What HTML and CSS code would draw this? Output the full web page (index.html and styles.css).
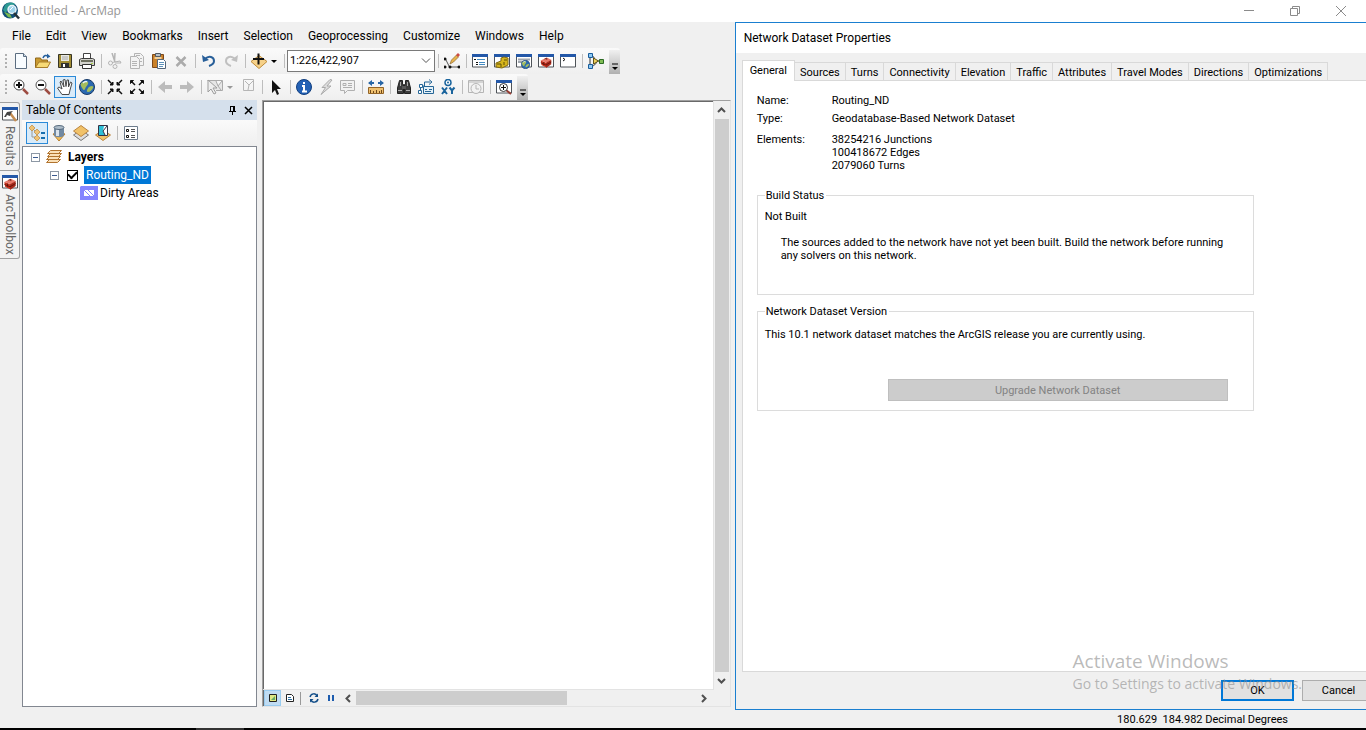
FILE: index.html
```html
<!DOCTYPE html>
<html lang="en">
<head>
<meta charset="utf-8">
<title>Untitled - ArcMap</title>
<link rel="stylesheet" href="styles.css">
</head>
<body>
<svg class="defs" aria-hidden="true">
  <defs>
    <symbol id="win" viewBox="0 0 16 16"><path d="M.5 1.500h15v12.500H.5z" fill="#fff" stroke="#4e5358"/><path d="M0 1h16v3H0z" fill="#2458a8"/></symbol>
    <symbol id="box" viewBox="0 0 16 16"><path d="M1 6l8-4 6 3-6 4z" fill="#e8796a"/><path d="M1 6l7 3v6l-6-3z" fill="#c8301c"/><path d="M8 9l7-4v6l-7 5z" fill="#a8281a"/><path d="M1 9l7 3 7-4M6 4l3-1v2M5 8v4" stroke="#571109" fill="none"/></symbol>
    <symbol id="globe" viewBox="0 0 16 16"><circle cx="8" cy="8" r="7.500" fill="#2b69b0" stroke="#173a68"/><path d="M4 3c4-2 6 0 5 2S7 7 6 10 3 9 2 7s0-3 2-4zM10 8c3-2 5-1 4 1s-3 4-5 4-1-3 1-5z" fill="#a4bd5c"/><path d="M4 4c1-1 3-2 4-1" stroke="#e8f4ff" stroke-width="1.500" fill="none"/></symbol>
  </defs>
</svg>
<div class="app">
  <header class="titlebar">
    <svg width="18" height="18" viewBox="0 0 18 18"><circle cx="8" cy="8.500" r="8" fill="#124f78"/><path d="M3 3c3-3 7-3 10-1l-3 3-4 1-2 5-3-3z" fill="#2d9a93"/><path d="M2 10l4 5 4 1-2-4z" fill="#78b84c"/><circle cx="10" cy="7.500" r="4" fill="#9fd4ec" stroke="#e8f3f7" stroke-width="1.500"/><path d="M8 8l3-3" stroke="#fff"/><path d="M12 11l5 5.500" stroke="#26323a" stroke-width="2.500"/></svg>
    <span class="caption">Untitled - ArcMap</span>
    <div class="winbtns">
      <button aria-label="Minimize"><svg width="12" height="12"><path d="M1 5.500h10" stroke="#8b8b8b"/></svg></button>
      <button aria-label="Restore"><svg width="12" height="12" fill="none" stroke="#8b8b8b"><path d="M1.500 3.500h7v7h-7zM3.500 3v-1.500h7v7H9"/></svg></button>
      <button aria-label="Close"><svg width="12" height="12"><path d="M1 1l10 10M11 1L1 11" stroke="#8b8b8b"/></svg></button>
    </div>
  </header>

  <main class="workspace">
    <section class="editor">
      <nav class="menubar">
        <button>File</button><button>Edit</button><button>View</button><button>Bookmarks</button><button>Insert</button><button>Selection</button><button>Geoprocessing</button><button>Customize</button><button>Windows</button><button>Help</button>
      </nav>

      <div class="toolbar" role="toolbar" aria-label="Standard">
        <span class="grip"></span>
        <button class="tool" aria-label="New"><svg viewBox="0 0 16 16"><path d="M2.500.5h8l3 3v12h-11z" fill="#f8fcff" stroke="#5b6d80"/><path d="M10.500.5v3h3" fill="#cbdcea" stroke="#5b6d80"/></svg></button>
        <button class="tool" aria-label="Open"><svg viewBox="0 0 16 16"><path d="M.5 14.500V5h5l1 2h6v7.500z" fill="#c99a31" stroke="#91691d"/><path d="M.5 14.500L4 9h11.500l-3 5.500z" fill="#f7da75" stroke="#a77d2b"/><path d="M8 5c1-3 3-3 5-2" stroke="#245f9d" stroke-width="1.500" fill="none"/><path d="M12 .5l3.500 3-3.500 2z" fill="#245f9d"/></svg></button>
        <button class="tool" aria-label="Save"><svg viewBox="0 0 16 16"><path d="M1.500 1.500h13v13h-13z" fill="#a28d34" stroke="#373526"/><path d="M4 2h8v6H4z" fill="#e9e9e3"/><path d="M5 4h6M5 6h6" stroke="#aaa"/><path d="M4 10h8v5H4z" fill="#303030"/><path d="M6 11h2v3H6z" fill="#fff"/></svg></button>
        <button class="tool" aria-label="Print"><svg viewBox="0 0 16 16"><path d="M4.500 6V.5h7V6" fill="#fff" stroke="#434343"/><path d="M.5 6.500l2-1h11l2 1v6H.5z" fill="#d4d4ce" stroke="#3d3d3d"/><path d="M2 8h12" stroke="#6e7060" stroke-width="2"/><path d="M3.500 11.500h9v4h-9z" fill="#fff" stroke="#333"/><path d="M12 10.500h2" stroke="#a8d34c"/></svg></button>
        <span class="sep"></span>
        <button class="tool" aria-label="Cut" disabled><svg viewBox="0 0 16 16" fill="none" stroke="#b4b4b4"><path d="M5 0l3 9M8 0l-.5 8" stroke-width="1.500"/><circle cx="3.500" cy="10" r="2"/><circle cx="8" cy="13.500" r="2"/><path d="M5 9.500l8-1.500 1 2-6 0" /></svg></button>
        <button class="tool" aria-label="Copy" disabled><svg viewBox="0 0 16 16" fill="#f3f3f3" stroke="#b4b4b4"><path d="M5.500.5h6l3 3v9h-9z"/><path d="M1.500 3.500h6l3 3v9h-9zM3 8.500h5M3 10.500h5M3 12.500h5M7 2.500h4M11 5.500h2M11 8.500h2"/></svg></button>
        <button class="tool" aria-label="Paste"><svg viewBox="0 0 16 16"><path d="M1.500 1.500h11v13h-11z" fill="#c98028" stroke="#7c4819"/><path d="M4.500.5h5v3h-5z" fill="#b8c0c8" stroke="#515a62"/><path d="M3.500 4h7v2h-7z" fill="#f1d09b"/><path d="M6.500 6.500h6l2 2v7h-8z" fill="#fff" stroke="#52657a"/><path d="M8 9.500h5M8 11.500h5M8 13.500h4" stroke="#5d91ba"/></svg></button>
        <button class="tool" aria-label="Delete" disabled><svg viewBox="0 0 16 16"><path d="M3.500 4l9 9M12.500 4l-9 9" stroke="#ababab" stroke-width="2.500"/></svg></button>
        <span class="sep"></span>
        <button class="tool" aria-label="Undo"><svg viewBox="0 0 16 16"><path d="M4 6c4-4 9-2 9 2 0 3-2 4-5 5" stroke="#285f99" stroke-width="2" fill="none"/><path d="M1 2l1 7 6-2z" fill="#285f99"/></svg></button>
        <button class="tool" aria-label="Redo" disabled><svg viewBox="0 0 16 16"><path d="M12 6C8 2 3 4 3 8c0 3 2 4 5 5" stroke="#c0c0c0" stroke-width="2" fill="none"/><path d="M15 2l-1 7-6-2z" fill="#c0c0c0"/></svg></button>
        <span class="sep"></span>
        <button class="tool" aria-label="Add Data"><svg viewBox="0 0 16 16"><path d="M8 2.500l8 6-8 7-8-7z" fill="#f6d189" stroke="#bf8c39"/><path d="M7.500.5v11M2 6h11" stroke="#111" stroke-width="2"/></svg></button>
        <button class="drop" aria-label="Add Data options"><svg viewBox="0 0 11 16"><path d="M1 7h6l-3 3z" fill="#000"/></svg></button>
        <span class="sep"></span>
        <div class="combo"><input type="text" aria-label="Map scale" value="1:226,422,907"><button aria-label="Scale list"><svg width="10" height="6"><path d="M1 .5l4 4 4-4" fill="none" stroke="#555"/></svg></button></div>
        <span class="sep"></span>
        <button class="tool" aria-label="Editor Toolbar"><svg viewBox="0 0 16 16"><path d="M1.500 6l4 8h9" stroke="#555" fill="none"/><path d="M0 5h2v2H0zM0 13h2v2H0zM5 13h2v2H5zM14 13h2v2h-2z" fill="#111" stroke="#111" stroke-width=".7"/><path d="M6 11l1.500-4 5-5 2 2-5 5z" fill="#e7b34b" stroke="#8f6933" stroke-width=".7"/><path d="M12 2l2-2 2 2-2 2z" fill="#cc4b43"/></svg></button>
        <span class="sep"></span>
        <button class="tool" aria-label="Table Of Contents"><svg viewBox="0 0 16 16"><use href="#win"/><path d="M2 6.500h2M4 9.500h2M4 11.500h2" stroke="#111"/><path d="M5 6.500h8M7 9.500h6M7 11.500h6" stroke="#438bc2"/></svg></button>
        <button class="tool" aria-label="Catalog"><svg viewBox="0 0 16 16"><use href="#win"/><path d="M2 10l5-2V5l3-1 4 1v7l-6 3-6-1z" fill="#d6b51c" stroke="#806911"/><path d="M3 11h4v3M10 7h3M10 9v3" fill="none" stroke="#5f4e08"/></svg></button>
        <button class="tool" aria-label="Search"><svg viewBox="0 0 16 16"><use href="#win"/><path d="M2 6.500h12M2 9h5" stroke="#a0a6ae" stroke-width="2"/><use href="#globe" x="5" y="7" width="9" height="9"/></svg></button>
        <button class="tool" aria-label="ArcToolbox"><svg viewBox="0 0 16 16"><use href="#win"/><use href="#box" x="1" y="3" width="14" height="12"/></svg></button>
        <button class="tool" aria-label="Python"><svg viewBox="0 0 16 16"><use href="#win"/><path d="M3 5l2 1.500L3 8" fill="none" stroke="#111"/></svg></button>
        <span class="sep"></span>
        <button class="tool" aria-label="ModelBuilder"><svg viewBox="0 0 16 16"><path d="M2 3v10M4 3c3 0 2 5 4 5s-1 5-4 5M9 8h4" fill="none" stroke="#333"/><path d="M.5.500h4v4h-4zM.5 11.500h4v4h-4z" fill="#8fc9f2" stroke="#195c9b"/><path d="M5.500 5l5 3-5 3z" fill="#f0d15b" stroke="#5f5417"/><path d="M11.500 6.500h4v4h-4z" fill="#80bd55" stroke="#2c6b24"/></svg></button>
        <button class="overflow" aria-label="Standard toolbar options"><svg width="8" height="8"><path d="M1 1h6" stroke="#000"/><path d="M1 4h6L4 7z"/></svg></button>
      </div>

      <div class="toolbar" role="toolbar" aria-label="Tools">
        <span class="grip"></span>
        <button class="tool" aria-label="Zoom In"><svg viewBox="0 0 16 16"><path d="M10 10l5 5" stroke="#9e4c42" stroke-width="2.500"/><circle cx="6" cy="6" r="5" fill="#fff" stroke="#444"/><path d="M6 3v6M3 6h6" stroke="#111" stroke-width="2"/></svg></button>
        <button class="tool" aria-label="Zoom Out"><svg viewBox="0 0 16 16"><path d="M10 10l5 5" stroke="#9e4c42" stroke-width="2.500"/><circle cx="6" cy="6" r="5" fill="#fff" stroke="#555"/><path d="M3 6h6" stroke="#111" stroke-width="2"/></svg></button>
        <button class="tool active" aria-label="Pan" aria-pressed="true"><svg viewBox="0 0 16 16"><path d="M5 15.500L.5 9l1.500-1 3 2-2-7 1-1 3 6L6 1l2-.5 1 7 1-6.500h1.500v7l2-5 1.500 1-2 7-1 4.500z" fill="#fff" stroke="#4a4a4a"/></svg></button>
        <button class="tool" aria-label="Full Extent"><svg viewBox="0 0 16 16"><use href="#globe"/></svg></button>
        <span class="sep"></span>
        <button class="tool" aria-label="Fixed Zoom In"><svg viewBox="0 0 16 16" fill="#111" stroke="#111" stroke-width="1.500"><path d="M1 1l4 4M15 1l-4 4M1 15l4-4M15 15l-4-4"/><path d="M6 3v3H3zM10 3v3h3zM6 13v-3H3zM10 13v-3h3z" stroke-width="1"/></svg></button>
        <button class="tool" aria-label="Fixed Zoom Out"><svg viewBox="0 0 16 16" fill="#111" stroke="#111" stroke-width="1.500"><path d="M2 2l4 4M14 2l-4 4M2 14l4-4M14 14l-4-4"/><path d="M1.500 4.500v-3h3zM14.500 4.500v-3h-3zM1.500 11.500v3h3zM14.500 11.500v3h-3z" stroke-width="1"/></svg></button>
        <span class="sep"></span>
        <button class="tool" aria-label="Back" disabled><svg viewBox="0 0 16 16"><path d="M1 8l7-6v4h7v4H8v4z" fill="#bcbcbc"/></svg></button>
        <button class="tool" aria-label="Forward" disabled><svg viewBox="0 0 16 16"><path d="M15 8L8 2v4H1v4h7v4z" fill="#bcbcbc"/></svg></button>
        <span class="sep"></span>
        <button class="tool" aria-label="Select Features" disabled><svg viewBox="0 0 16 16"><path d="M.5 1.500h15v10H9M9 2l2 5 4-5M11 7l3 4" fill="#e6e6e6" stroke="#aaa"/><path d="M1 1v12l3-3 3 5 2-1-3-5h4z" fill="#eee" stroke="#9d9d9d"/></svg></button>
        <button class="drop" aria-label="Selection options" disabled><svg viewBox="0 0 11 16"><path d="M1 7h6l-3 3z" fill="#999"/></svg></button>
        <button class="tool" aria-label="Clear Selection" disabled><svg viewBox="0 0 16 16"><path d="M3.500.5h10v11h-10zM5 2l4 4 4-4M9 6l-1 5" fill="none" stroke="#b5b5b5"/></svg></button>
        <span class="sep"></span>
        <button class="tool" aria-label="Select Elements"><svg viewBox="0 0 16 16"><path d="M4 1v13l3-3 2 5 2-1-2-5h4z" fill="#111"/></svg></button>
        <span class="sep"></span>
        <button class="tool" aria-label="Identify"><svg viewBox="0 0 16 16"><circle cx="8" cy="8" r="7.500" fill="#2361b5" stroke="#123f7f"/><path d="M8 3v2M6 7h2v5M6 12.500h5" stroke="#fff" stroke-width="2" fill="none"/></svg></button>
        <button class="tool" aria-label="Hyperlink" disabled><svg viewBox="0 0 16 16"><path d="M12 .5L4 8.500h3.500L3 15.500 13 7H9l5-6z" fill="#ddd" stroke="#aaa"/></svg></button>
        <button class="tool" aria-label="HTML Popup" disabled><svg viewBox="0 0 16 16"><path d="M.5 1.500h14v10h-7l-3 3v-3h-4z" fill="#f2f2f2" stroke="#b0b0b0"/><path d="M3 4.500h3v2H3zM3 8.500h9M8 4.500h4M8 6.500h4" stroke="#b0b0b0" fill="none"/></svg></button>
        <span class="sep"></span>
        <button class="tool" aria-label="Measure"><svg viewBox="0 0 16 16"><path d="M1 4h5M10 4h5" stroke="#2866a5" stroke-width="2"/><path d="M0 4l4-3v6zM16 4l-4-3v6z" fill="#2866a5"/><path d="M.5 8.500h15v6H.5z" fill="#efc06f" stroke="#936427"/><path d="M2.500 11v3M5.500 12v2M8.500 11v3M11.500 12v2M13.500 11v3" stroke="#6f4819"/></svg></button>
        <span class="sep"></span>
        <button class="tool" aria-label="Find"><svg viewBox="0 0 16 16"><path d="M3.500 1.500h3v4h1v9h-6V9zM9.500 1.500h3l2 7.500v5.500h-6V5.500h1z" fill="#3c3c3c" stroke="#222"/><path d="M6 7h4v3H6z" fill="#555"/><path d="M2 11.500h4M10 11.500h4M4.500 3v4M11.500 3v4" stroke="#ababab"/></svg></button>
        <button class="tool" aria-label="Find Route"><svg viewBox="0 0 16 16" fill="none" stroke="#276797"><path d="M2.500 13V7h4V3h6M11 .5l3 2.500-3 2.500"/><path d="M.5 11.500h3v3h-3zM1.500 5.500h3v3h-3z" fill="#fff"/><path d="M5.500 7.500h10v7h-10zM7 10.500h2M11 10.500h3M7 12.500h6" fill="#e5f1f8"/></svg></button>
        <button class="tool" aria-label="Go To XY"><svg viewBox="0 0 16 16"><circle cx="8" cy="3.500" r="3" fill="#fff" stroke="#1a649d" stroke-width="1.500"/><circle cx="8" cy="3.500" r="1" fill="#1a649d"/><path d="M2 8.500l5 6.500M7 8.500L2 15M9.500 8.500l2.500 3 2.500-3M12 11v4" fill="none" stroke="#1a649d" stroke-width="2"/></svg></button>
        <span class="sep"></span>
        <button class="tool" aria-label="Time Slider" disabled><svg viewBox="0 0 16 16" fill="#f2f2f2" stroke="#b5b5b5"><path d="M.5 1.500h15v12H.5z"/><path d="M1 3h14"/><circle cx="8" cy="9.500" r="5"/><path d="M8 6v4h3" fill="none"/></svg></button>
        <span class="sep"></span>
        <button class="tool" aria-label="Viewer Window"><svg viewBox="0 0 16 16"><use href="#win"/><path d="M10 11l5 4" stroke="#943c32" stroke-width="2"/><circle cx="7.500" cy="8.500" r="4" fill="#fff" stroke="#333"/><path d="M7.500 6v5M5 8.500h5" stroke="#111"/></svg></button>
        <button class="overflow" aria-label="Tools toolbar options"><svg width="8" height="8"><path d="M1 1h6" stroke="#000"/><path d="M1 4h6L4 7z"/></svg></button>
      </div>

      <div class="panes">
        <div class="sidetabs">
          <button><svg width="16" height="16" viewBox="0 0 16 16"><use href="#win"/><path d="M8 7l6 8" stroke="#c58d51" stroke-width="2.500"/><path d="M2 11l3-5 6-1-2 2-1 3-3-1-1 2z" fill="#444"/></svg><span>Results</span></button>
          <button><svg width="16" height="16" viewBox="0 0 16 16"><use href="#win"/><use href="#box" x="1" y="3" width="14" height="13"/></svg><span>ArcToolbox</span></button>
        </div>

        <aside class="toc">
          <div class="toc-head"><h2>Table Of Contents</h2>
            <button aria-label="Auto Hide"><svg width="9" height="10"><path d="M2.500 1v5M2 1.500h5M1 6.500h7M4.500 6v4" stroke="#000" fill="none"/><path d="M5 1h2v5H5z"/></svg></button>
            <button aria-label="Close"><svg width="9" height="9"><path d="M1 1l7 7M8 1L1 8" stroke="#000" stroke-width="1.500"/></svg></button>
          </div>
          <div class="toc-tools">
            <button class="tool active" aria-label="List By Drawing Order"><svg viewBox="0 0 16 16"><path d="M3 4v8h5M4 4l4 4" fill="none" stroke="#999"/><path d="M3 0l3 3-3 3-3-3zM8 4l3 3-3 3-3-3zM8 10l3 3-3 3-3-3z" fill="#efc374" stroke="#ba8741" stroke-width=".7"/><path d="M12 8h4M12 13h4" stroke="#176eae" stroke-width="2"/></svg></button>
            <button class="tool" aria-label="List By Source"><svg viewBox="0 0 16 16"><path d="M2 9l6-2 6 2-6 7z" fill="#efbc5c" stroke="#b68132"/><path d="M3 2v8c0 3 10 3 10 0V2z" fill="#7189a2"/><path d="M5 4v7h3V4z" fill="#d9e3ec"/><ellipse cx="8" cy="2.500" rx="5" ry="2" fill="#aebdca" stroke="#55697d"/></svg></button>
            <button class="tool" aria-label="List By Visibility"><svg viewBox="0 0 16 16"><path d="M8 5l7.500 5L8 15.500.5 10z" fill="#ddd" stroke="#777"/><path d="M8 .5L15.500 6 8 11.500.5 6z" fill="#f1c269" stroke="#bb8540"/></svg></button>
            <button class="tool" aria-label="List By Selection"><svg viewBox="0 0 16 16"><path d="M8 5l7.500 5L8 15.500.5 10z" fill="#f1c269" stroke="#bb8540"/><path d="M3.500.5h9v10h-9z" fill="#fff" stroke="#334"/><path d="M4 1h5l-1 5 2 4H4z" fill="#30bfd6"/><path d="M12 1L8 6l2 4" stroke="#334" fill="none"/></svg></button>
            <span class="sep"></span>
            <button class="tool" aria-label="Options"><svg viewBox="0 0 16 16"><path d="M1.500 1.500h13v13h-13z" fill="#fff" stroke="#6c7b8b"/><path d="M8 4.500h4M8 6.500h4M8 10.500h4M8 12.500h4" stroke="#555"/><path d="M3.500 4.500h2v2h-2zM3.500 10.500h2v2h-2z" fill="none" stroke="#111"/></svg></button>
          </div>
          <ul class="tree">
            <li class="lvl0"><button class="toggle" aria-label="Collapse Layers"></button><svg width="16" height="14" viewBox="0 0 16 14" fill="#fae0b8" stroke="#b1732e"><path d="M.5 12.500l3-3h11l-3 3zM.5 9.500l3-3h11l-3 3zM1.500 6.500l3-3h11l-3 3zM1.500 3.500l3-3h11l-3 3z"/></svg><b>Layers</b></li>
            <li class="lvl1"><button class="toggle" aria-label="Collapse Routing_ND"></button><input type="checkbox" id="nd" checked><label class="picked" for="nd">Routing_ND</label></li>
            <li class="lvl2"><svg width="18" height="14" viewBox="0 0 18 14"><path d="M1 0h17v14H0V1z" fill="#8585ff"/><path d="M4 4h10v6H4z" fill="#fff"/><path d="M4 4l6 6M8 4l6 6" stroke="#8585ff"/></svg><span>Dirty Areas</span></li>
          </ul>
        </aside>

        <section class="map">
          <div class="canvas"></div>
          <div class="vscroll"><button aria-label="Scroll up"><svg width="9" height="6"><path d="M1 5l3.500-3.500L8 5" fill="none" stroke="#505050" stroke-width="2"/></svg></button><span class="thumb"></span><button aria-label="Scroll down"><svg width="9" height="6"><path d="M1 1l3.500 3.500L8 1" fill="none" stroke="#505050" stroke-width="2"/></svg></button></div>
          <div class="mapbar">
            <button class="view on" aria-label="Data View"><svg width="8" height="8"><path d="M.5.5h7v7h-7z" fill="#dfe884" stroke="#222"/><path d="M2 6l4-4v4z" fill="#67aa66"/></svg></button>
            <button class="view" aria-label="Layout View"><svg width="8" height="8"><path d="M.5.5h5l2 2v5h-7z" fill="#fff" stroke="#222"/><path d="M2 3.500h3M2 5.500h4" stroke="#2b6b9b"/></svg></button>
            <span class="bar"></span>
            <button class="view" aria-label="Refresh"><svg width="10" height="10" fill="none" stroke="#124d88" stroke-width="1.500"><path d="M1 4c1-4 6-4 7-1M9 6c-1 4-6 4-7 1"/><path d="M9 .5v3.500H5.500zM1 9.500V6h3.500z" fill="#124d88" stroke="none"/></svg></button>
            <button class="view" aria-label="Pause Drawing"><svg width="8" height="8"><path d="M1 1h2v6H1zM5 1h2v6H5z" fill="#1d5cae"/></svg></button>
            <div class="hscroll"><button aria-label="Scroll left"><svg width="6" height="9"><path d="M5 1L1.500 4.500 5 8" fill="none" stroke="#505050" stroke-width="2"/></svg></button><span class="track"><span class="thumb"></span></span><button aria-label="Scroll right"><svg width="6" height="9"><path d="M1 1l3.500 3.500L1 8" fill="none" stroke="#505050" stroke-width="2"/></svg></button></div>
          </div>
        </section>
      </div>
    </section>

    <section class="dialog" role="dialog" aria-labelledby="dlg-title">
      <h1 id="dlg-title">Network Dataset Properties</h1>
      <div class="tabs" role="tablist">
        <button role="tab" aria-selected="true">General</button><button role="tab">Sources</button><button role="tab">Turns</button><button role="tab">Connectivity</button><button role="tab">Elevation</button><button role="tab">Traffic</button><button role="tab">Attributes</button><button role="tab">Travel Modes</button><button role="tab">Directions</button><button role="tab">Optimizations</button>
      </div>
      <div class="page">
        <dl class="facts">
          <dt>Name:</dt><dd>Routing_ND</dd>
          <dt>Type:</dt><dd>Geodatabase-Based Network Dataset</dd>
          <dt>Elements:</dt><dd>38254216 Junctions<br>100418672 Edges<br>2079060 Turns</dd>
        </dl>
        <fieldset class="build">
          <legend>Build Status</legend>
          <p>Not Built</p>
          <p class="note">The sources added to the network have not yet been built. Build the network before running<br>any solvers on this network.</p>
        </fieldset>
        <fieldset class="version">
          <legend>Network Dataset Version</legend>
          <p>This 10.1 network dataset matches the ArcGIS release you are currently using.</p>
          <button class="upgrade" disabled>Upgrade Network Dataset</button>
        </fieldset>
      </div>
      <div class="actions"><button class="ok">OK</button><button>Cancel</button></div>
    </section>
  </main>

  <footer class="status"><span>180.629&nbsp; 184.982 Decimal Degrees</span></footer>
  <div class="taskbar"><span></span></div>
  <div class="watermark"><strong>Activate Windows</strong><span>Go to Settings to activate Windows.</span></div>
</div>
</body>
</html>
```
FILE: styles.css
```css
* { box-sizing: border-box; }
body { margin: 0; background: #f0f0f0; color: #000; font: 12px/16px Roboto, "Open Sans", sans-serif; }
button { margin: 0; padding: 0; border: 0; background: none; color: inherit; font: inherit; }
svg { display: block; flex: none; }
h1, h2, p, ul, dl, dd { margin: 0; padding: 0; font-size: inherit; font-weight: normal; }
.defs { position: absolute; width: 0; height: 0; }
.app { position: relative; display: flex; flex-direction: column; height: 100vh; overflow: hidden; }

.titlebar { display: flex; align-items: center; height: 22px; padding-left: 2px; background: #fff; color: #969696; flex: none; }
.caption { margin-left: 3px; flex: 1; font-family: "Open Sans", sans-serif; }
.winbtns { display: flex; padding-right: 2px; }
.winbtns button { display: flex; justify-content: center; align-items: center; width: 46px; height: 20px; }

.workspace { display: flex; flex: 1; min-height: 0; }
.editor { display: flex; flex-direction: column; width: 54%; flex: none; padding: 1px 7px 3px 0; }
.menubar { display: flex; gap: 15px; height: 25px; align-items: center; padding-left: 12px; }

.toolbar { display: flex; align-items: center; height: 26px; width: fit-content; padding-left: 5px; background: linear-gradient(#fafafa, #efefef); border-radius: 3px; }
.grip { width: 2px; height: 14px; margin-right: 3px; background: repeating-linear-gradient(#b0b0b0 0 2px, transparent 2px 4px); }
.tool { display: flex; align-items: center; justify-content: center; width: 22px; height: 22px; border: 1px solid transparent; }
.tool svg { width: 16px; height: 16px; }
.tool.active { background: #d9ebf9; border-color: #2b8ad8; }
.drop svg { width: 11px; height: 16px; }
.sep { width: 6px; height: 14px; background: linear-gradient(#bdbdbd, #bdbdbd) center / 1px 100% no-repeat; }
.combo { display: flex; align-items: center; width: 148px; height: 22px; border: 1px solid #7a7a7a; background: #fff; }
.combo input { flex: 1; min-width: 0; height: 16px; border: 0; padding: 0 2px; background: none; font: inherit; font-size: 11px; outline: 0; }
.combo button { padding: 0 3px; }
.overflow { display: flex; justify-content: center; align-items: flex-end; width: 11px; height: 24px; margin-left: 2px; padding-bottom: 3px; background: linear-gradient(#f0f0f0, #b0b0b0); align-self: flex-end; }

.panes { display: flex; flex: 1; min-height: 0; }
.sidetabs { width: 20px; margin-right: 2px; padding-top: 2px; flex: none; }
.sidetabs button { display: flex; flex-direction: column; align-items: center; gap: 4px; width: 20px; padding: 3px 0 4px; border: 1px solid #a0a0a0; border-left: 0; border-radius: 0 3px 3px 0; background: #f3f3f3; color: #666; }
.sidetabs button + button { margin-top: -1px; }
.sidetabs span { writing-mode: vertical-rl; }

.toc { display: flex; flex-direction: column; width: 235px; flex: none; }
.toc-head { display: flex; align-items: center; gap: 7px; height: 20px; padding: 0 4px; background: #d5e0ec; }
.toc-head h2 { flex: 1; }
.toc-tools { display: flex; align-items: center; height: 26px; padding-left: 4px; background: linear-gradient(#fafafa, #efefef); }
.tree { flex: 1; padding-top: 1px; border: 1px solid #828790; background: #fff; list-style: none; }
.tree li { display: flex; align-items: center; height: 18px; }
.tree .lvl0 { padding-left: 8px; gap: 6px; }
.tree .lvl1 { padding-left: 27px; }
.tree .lvl2 { padding-left: 57px; gap: 2px; }
.toggle { width: 9px; height: 9px; border: 1px solid #8d98a5; background: linear-gradient(#3b5b91, #3b5b91) center / 5px 1px no-repeat #fff; }
.tree input { appearance: none; width: 11px; height: 11px; margin: 0 6px 0 8px; border: 1px solid #000; background: #fff; display: grid; place-items: center; }
.tree input:checked::before { content: ""; width: 7px; height: 4px; margin-top: -2px; border: solid #000; border-width: 0 0 2px 2px; rotate: -45deg; }
.picked { padding: 1px 2px; background: #0078d7; color: #fff; }

.map { display: grid; flex: 1; grid-template: 1fr 16px / 1fr 16px; margin-left: 5px; border: 1px solid #a0a0a0; border-right-color: #e3e3e3; border-bottom-color: #e3e3e3; }
.canvas { border: solid #e3e3e3; border-width: 0 1px 1px 0; background: #fff; box-shadow: inset 1px 1px #696969; }
.vscroll { display: flex; flex-direction: column; align-items: center; padding: 0 1px; }
.vscroll button { display: grid; place-items: center; width: 14px; height: 18px; }
.vscroll .thumb { flex: 1; align-self: stretch; background: #cdcdcd; }
.mapbar { display: flex; align-items: center; grid-column: 1 / 3; padding-right: 17px; border-left: 1px solid #696969; }
.view { display: grid; place-items: center; width: 17px; height: 16px; }
.view.on { background: #c0dcf3; border: 1px solid #99ccf0; }
.bar { width: 1px; height: 13px; margin: 0 4px 0 2px; background: #999; }
.hscroll { display: flex; flex: 1; height: 14px; }
.hscroll button { display: grid; place-items: center; width: 17px; }
.track { flex: 1; }
.track .thumb { display: block; width: 62%; height: 14px; background: #cdcdcd; }

.dialog { display: flex; flex-direction: column; flex: 1; min-width: 0; margin-left: -3px; padding-left: 6px; border: solid #1a7fd0; border-width: 1px 0 1px 1px; background: #f0f0f0; font-size: 11px; line-height: 13px; overflow: hidden; }
.dialog h1 { height: 30px; margin-left: -6px; padding-left: 8px; background: #fff; font-size: 12px; line-height: 30px; }
.tabs { display: flex; align-items: flex-end; padding-top: 7px; }
.tabs button { height: 18px; padding: 1px 5px 0; border: 1px solid #d9d9d9; border-left: 0; border-bottom: 0; white-space: nowrap; }
.tabs button[aria-selected] { height: 21px; margin-bottom: -1px; padding: 0 7px 2px; border-left: 1px solid #d9d9d9; background: #fff; position: relative; }
.page { flex: 1; padding: 13px 14px; border: solid #d9d9d9; border-width: 1px 0 1px 1px; background: #fff; }
.facts { display: grid; grid-template-columns: 75px 1fr; row-gap: 5px; }
.facts dt:last-of-type, .facts dd:last-of-type { padding-top: 3px; }
fieldset { width: 497px; margin: 0; padding: 0 7px; border: 1px solid #dcdcdc; min-width: 0; }
legend { padding: 0 2px 0 1px; }
.build { height: 106px; margin-top: 17px; }
.build p { padding-top: 8px; }
.build .note { padding: 13px 0 0 16px; white-space: nowrap; }
.version { height: 106px; margin-top: 10px; }
.version p { padding-top: 10px; }
.upgrade { display: block; width: 340px; height: 22px; margin: 38px 18px 0 auto; border: 1px solid #bfbfbf; background: #ccc; color: #838383; }
.actions { display: flex; gap: 8px; height: 37px; padding: 8px 0; justify-content: flex-end; margin-right: -9px; }
.actions button { width: 73px; height: 21px; border: 1px solid #adadad; background: #e1e1e1; }
.actions .ok { border: 2px solid #0078d7; }

.status { height: 18px; flex: none; padding-right: 78px; font-size: 11px; text-align: right; line-height: 19px; }
.taskbar { height: 2px; flex: none; padding-left: 196px; background: #000; }
.taskbar span { display: block; width: 48px; height: 2px; background: #333; }
.watermark { position: absolute; right: 64px; bottom: 35px; display: flex; flex-direction: column; color: rgba(140, 140, 140, .6); font-family: "Open Sans", sans-serif; pointer-events: none; }
.watermark strong { font-weight: normal; font-size: 19px; line-height: 24px; }
.watermark span { font-size: 14px; line-height: 22px; }
```
